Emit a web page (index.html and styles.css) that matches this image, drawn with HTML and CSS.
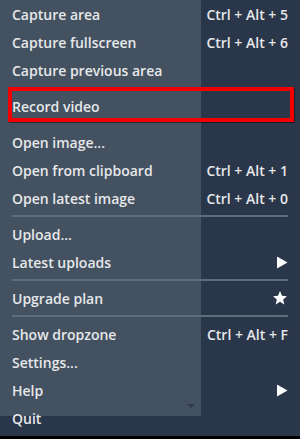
FILE: index.html
```html
<!DOCTYPE html>
<html lang="en">
<head>
  <meta charset="UTF-8"/>
  <title>Tray menu</title>
  <link rel="stylesheet" href="styles.css">
</head>
<body>
<div class="screen">
  <div class="window">
    <span class="scroll-arrow"></span>
  </div>

  <ul class="menu">
    <li class="item"><span>Capture area</span><span class="key">Ctrl + Alt + 5</span></li>
    <li class="item"><span>Capture fullscreen</span><span class="key">Ctrl + Alt + 6</span></li>
    <li class="item"><span>Capture previous area</span></li>
    <li class="sep hidden"></li>
    <li class="item marked"><span>Record video</span></li>
    <li class="sep hidden"></li>
    <li class="item"><span>Open image...</span></li>
    <li class="item"><span>Open from clipboard</span><span class="key">Ctrl + Alt + 1</span></li>
    <li class="item"><span>Open latest image</span><span class="key">Ctrl + Alt + 0</span></li>
    <li class="sep"></li>
    <li class="item"><span>Upload...</span></li>
    <li class="item"><span>Latest uploads</span>
      <svg class="icon" width="12" height="13" viewBox="0 0 12 13"><path d="M1 0.5 L11.5 6.5 L1 12.5 Z" fill="#fff"/></svg>
    </li>
    <li class="sep"></li>
    <li class="item"><span>Upgrade plan</span>
      <svg class="icon" width="16" height="16" viewBox="0 0 24 24"><path d="M12 1.5 L14.9 8.6 L22.5 9.2 L16.7 14.2 L18.5 21.8 L12 17.7 L5.5 21.8 L7.3 14.2 L1.5 9.2 L9.1 8.6 Z" fill="#fff"/></svg>
    </li>
    <li class="sep"></li>
    <li class="item"><span>Show dropzone</span><span class="key">Ctrl + Alt + F</span></li>
    <li class="item"><span>Settings...</span></li>
    <li class="item"><span>Help</span>
      <svg class="icon" width="12" height="13" viewBox="0 0 12 13"><path d="M1 0.5 L11.5 6.5 L1 12.5 Z" fill="#fff"/></svg>
    </li>
    <li class="item"><span>Quit</span></li>
  </ul>
</div>
</body>
</html>
```

FILE: styles.css
```css
body {
  margin: 0;
  background-color: #000;
  font-family: "Open Sans", "Noto Sans", sans-serif;
}
.screen {
  position: relative;
  width: 300px;
  height: 436px;
  background-color: #2a3649;
  overflow: hidden;
}
.window {
  width: 201px;
  height: 416px;
  background-color: #435160;
  position: relative;
}
.scroll-arrow {
  position: absolute;
  left: 187px;
  top: 404px;
  border-left: 4px solid transparent;
  border-right: 4px solid transparent;
  border-top: 4px solid #2f3a4a;
}
.menu {
  position: absolute;
  top: 0;
  left: 0;
  right: 0;
  margin: 0;
  padding: 0 12px;
  list-style: none;
}
.item {
  height: 28px;
  display: flex;
  align-items: center;
  justify-content: space-between;
  font-size: 14px;
  font-weight: 600;
  color: #e6e8ea;
  white-space: nowrap;
  position: relative;
}
.key {
  font-weight: 600;
}
.icon {
  display: block;
}
.sep {
  height: 2px;
  margin: 3px 0;
  background-color: #5f6c7a;
}
.sep.hidden {
  background-color: transparent;
}
.marked::after {
  content: "";
  position: absolute;
  top: -5px;
  left: -4px;
  right: -6px;
  bottom: -2px;
  border: 4px solid #f20000;
  box-shadow: 1px 1px 0 rgba(0,0,0,0.45);
}
```
